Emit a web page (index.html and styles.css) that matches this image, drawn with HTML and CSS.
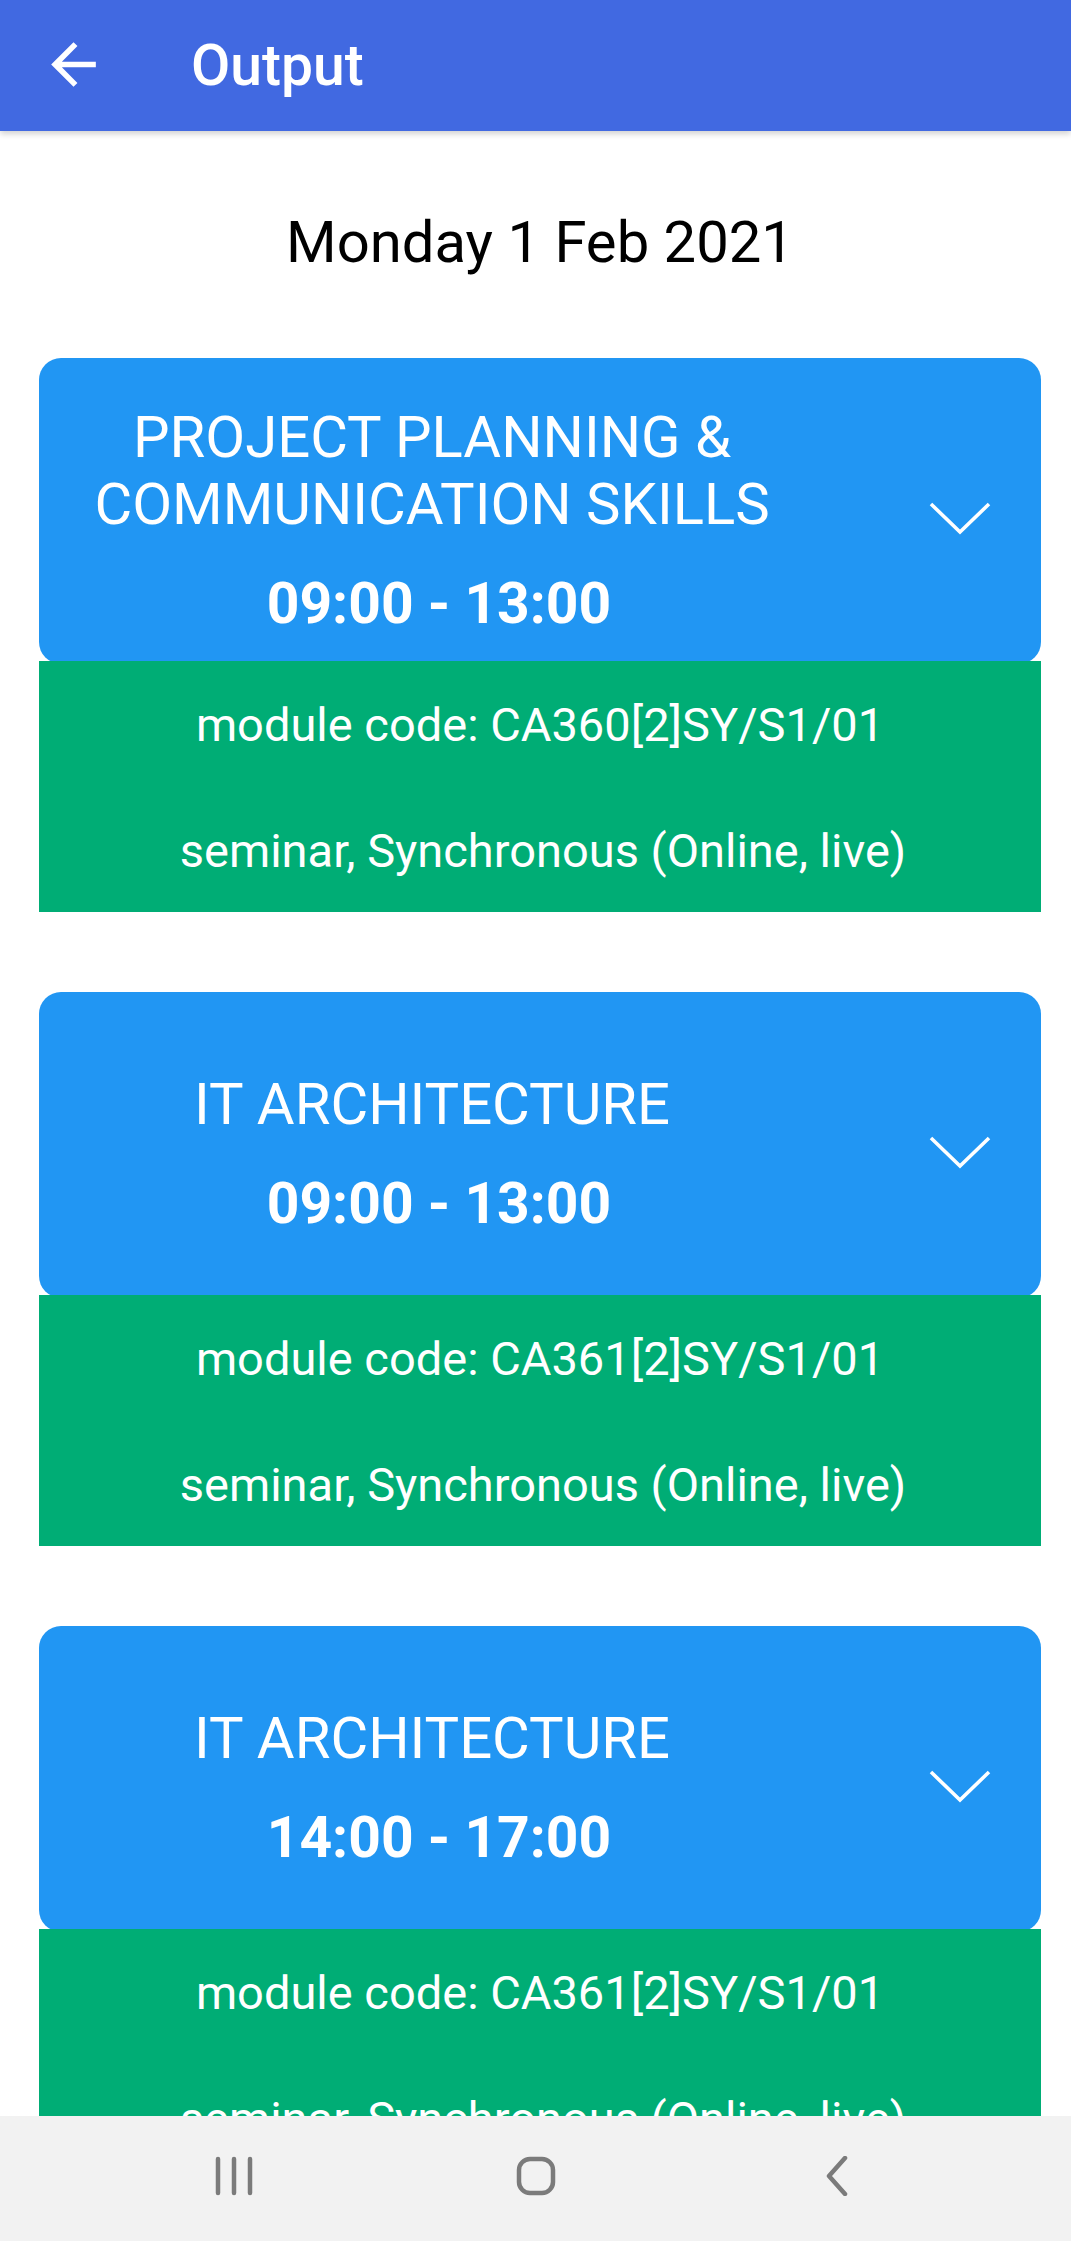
FILE: index.html
```html
<!DOCTYPE html>
<html>
<head>
<meta charset="utf-8">
<link rel="stylesheet" href="styles.css">
</head>
<body>
<header class="appbar">
  <svg class="back" viewBox="0 0 24 24" width="67" height="67"><path fill="#fff" d="M20 11H7.83l5.59-5.59L12 4l-8 8 8 8 1.41-1.41L7.83 13H20v-2z"/></svg>
  <h1 class="apptitle">Output</h1>
</header>
<main class="content">
  <div class="date">Monday 1 Feb 2021</div>

  <section class="card">
    <div class="card-head">
      <div class="head-text">
        <div class="title">PROJECT PLANNING &amp; COMMUNICATION SKILLS</div>
        <div class="time">09:00 - 13:00</div>
      </div>
      <div class="chev"><svg viewBox="0 0 62 33" width="62" height="33"><polyline points="2,2 31,30 60,2" fill="none" stroke="#fff" stroke-width="3.6"/></svg></div>
    </div>
    <div class="card-body">
      <div class="line">module code: CA360[2]SY/S1/01</div>
      <div class="line">seminar, Synchronous (Online, live)</div>
    </div>
  </section>

  <section class="card">
    <div class="card-head">
      <div class="head-text">
        <div class="title">IT ARCHITECTURE</div>
        <div class="time">09:00 - 13:00</div>
      </div>
      <div class="chev"><svg viewBox="0 0 62 33" width="62" height="33"><polyline points="2,2 31,30 60,2" fill="none" stroke="#fff" stroke-width="3.6"/></svg></div>
    </div>
    <div class="card-body">
      <div class="line">module code: CA361[2]SY/S1/01</div>
      <div class="line">seminar, Synchronous (Online, live)</div>
    </div>
  </section>

  <section class="card">
    <div class="card-head">
      <div class="head-text">
        <div class="title">IT ARCHITECTURE</div>
        <div class="time">14:00 - 17:00</div>
      </div>
      <div class="chev"><svg viewBox="0 0 62 33" width="62" height="33"><polyline points="2,2 31,30 60,2" fill="none" stroke="#fff" stroke-width="3.6"/></svg></div>
    </div>
    <div class="card-body">
      <div class="line">module code: CA361[2]SY/S1/01</div>
      <div class="line">seminar, Synchronous (Online, live)</div>
    </div>
  </section>
</main>
<nav class="navbar">
  <div class="navicon"><svg viewBox="0 0 40 40" width="40" height="40"><g stroke="#7b7b7b" stroke-width="4.5" stroke-linecap="round"><line x1="4" y1="3" x2="4" y2="37"/><line x1="20" y1="3" x2="20" y2="37"/><line x1="36" y1="3" x2="36" y2="37"/></g></svg></div>
  <div class="navicon"><svg viewBox="0 0 40 40" width="40" height="40"><rect x="3" y="3" width="34" height="34" rx="11" fill="none" stroke="#7b7b7b" stroke-width="4.5"/></svg></div>
  <div class="navicon"><svg viewBox="0 0 40 40" width="40" height="40"><polyline points="27,2 11,20 27,38" fill="none" stroke="#7b7b7b" stroke-width="4.5" stroke-linecap="round" stroke-linejoin="round"/></svg></div>
</nav>
</body>
</html>
```
FILE: styles.css
```css
html, body {
  margin: 0;
  padding: 0;
  background: #ffffff;
  font-family: Roboto, "Liberation Sans", sans-serif;
}

.appbar {
  height: 131px;
  background: #4169e1;
  display: flex;
  align-items: center;
  padding-left: 40px;
  box-shadow: 0 3px 6px rgba(0, 0, 0, 0.18);
  position: relative;
  z-index: 2;
}

.back {
  display: block;
  margin-top: -2px;
}

.apptitle {
  margin: 0 0 0 84px;
  color: #ffffff;
  font-size: 57px;
  font-weight: 500;
  line-height: 67px;
}

.content {
  padding: 0 30px 200px 39px;
}

.date {
  padding-top: 78px;
  line-height: 67px;
  font-size: 58px;
  text-align: center;
  color: #000;
  margin-bottom: 82px;
}

.card {
  width: 1002px;
  margin-bottom: 80px;
}

.card-head {
  height: 306px;
  box-sizing: border-box;
  padding-top: 18px;
  background: #2196f3;
  border-radius: 22px;
  display: flex;
  align-items: center;
  color: #fff;
}

.head-text {
  flex: 1;
  text-align: center;
}

.title {
  font-size: 58px;
  line-height: 67px;
  padding: 0 8px 0 0;
}

.time {
  margin-top: 32px;
  font-size: 57px;
  line-height: 67px;
  font-weight: 700;
  padding-left: 6px;
}

.chev {
  width: 208px;
  box-sizing: border-box;
  display: flex;
  justify-content: flex-end;
  padding-right: 50px;
  margin-top: -4px;
}

.chev svg {
  display: block;
}

.card-body {
  background: #00ad75;
  color: #fff;
  text-align: center;
  padding: 34px 0 31px;
  display: flex;
  flex-direction: column;
  gap: 66px;
  margin-top: -3px;
}

.line {
  font-size: 47px;
  line-height: 60px;
}

.line + .line {
  padding-left: 6px;
}

.navbar {
  position: fixed;
  left: 0;
  right: 0;
  bottom: 0;
  height: 125px;
  background: #f2f2f2;
  display: flex;
  justify-content: center;
  align-items: center;
  gap: 262px;
  z-index: 3;
}

.navicon {
  width: 40px;
  height: 40px;
  margin-top: -5px;
}

.navicon svg {
  display: block;
}
```
